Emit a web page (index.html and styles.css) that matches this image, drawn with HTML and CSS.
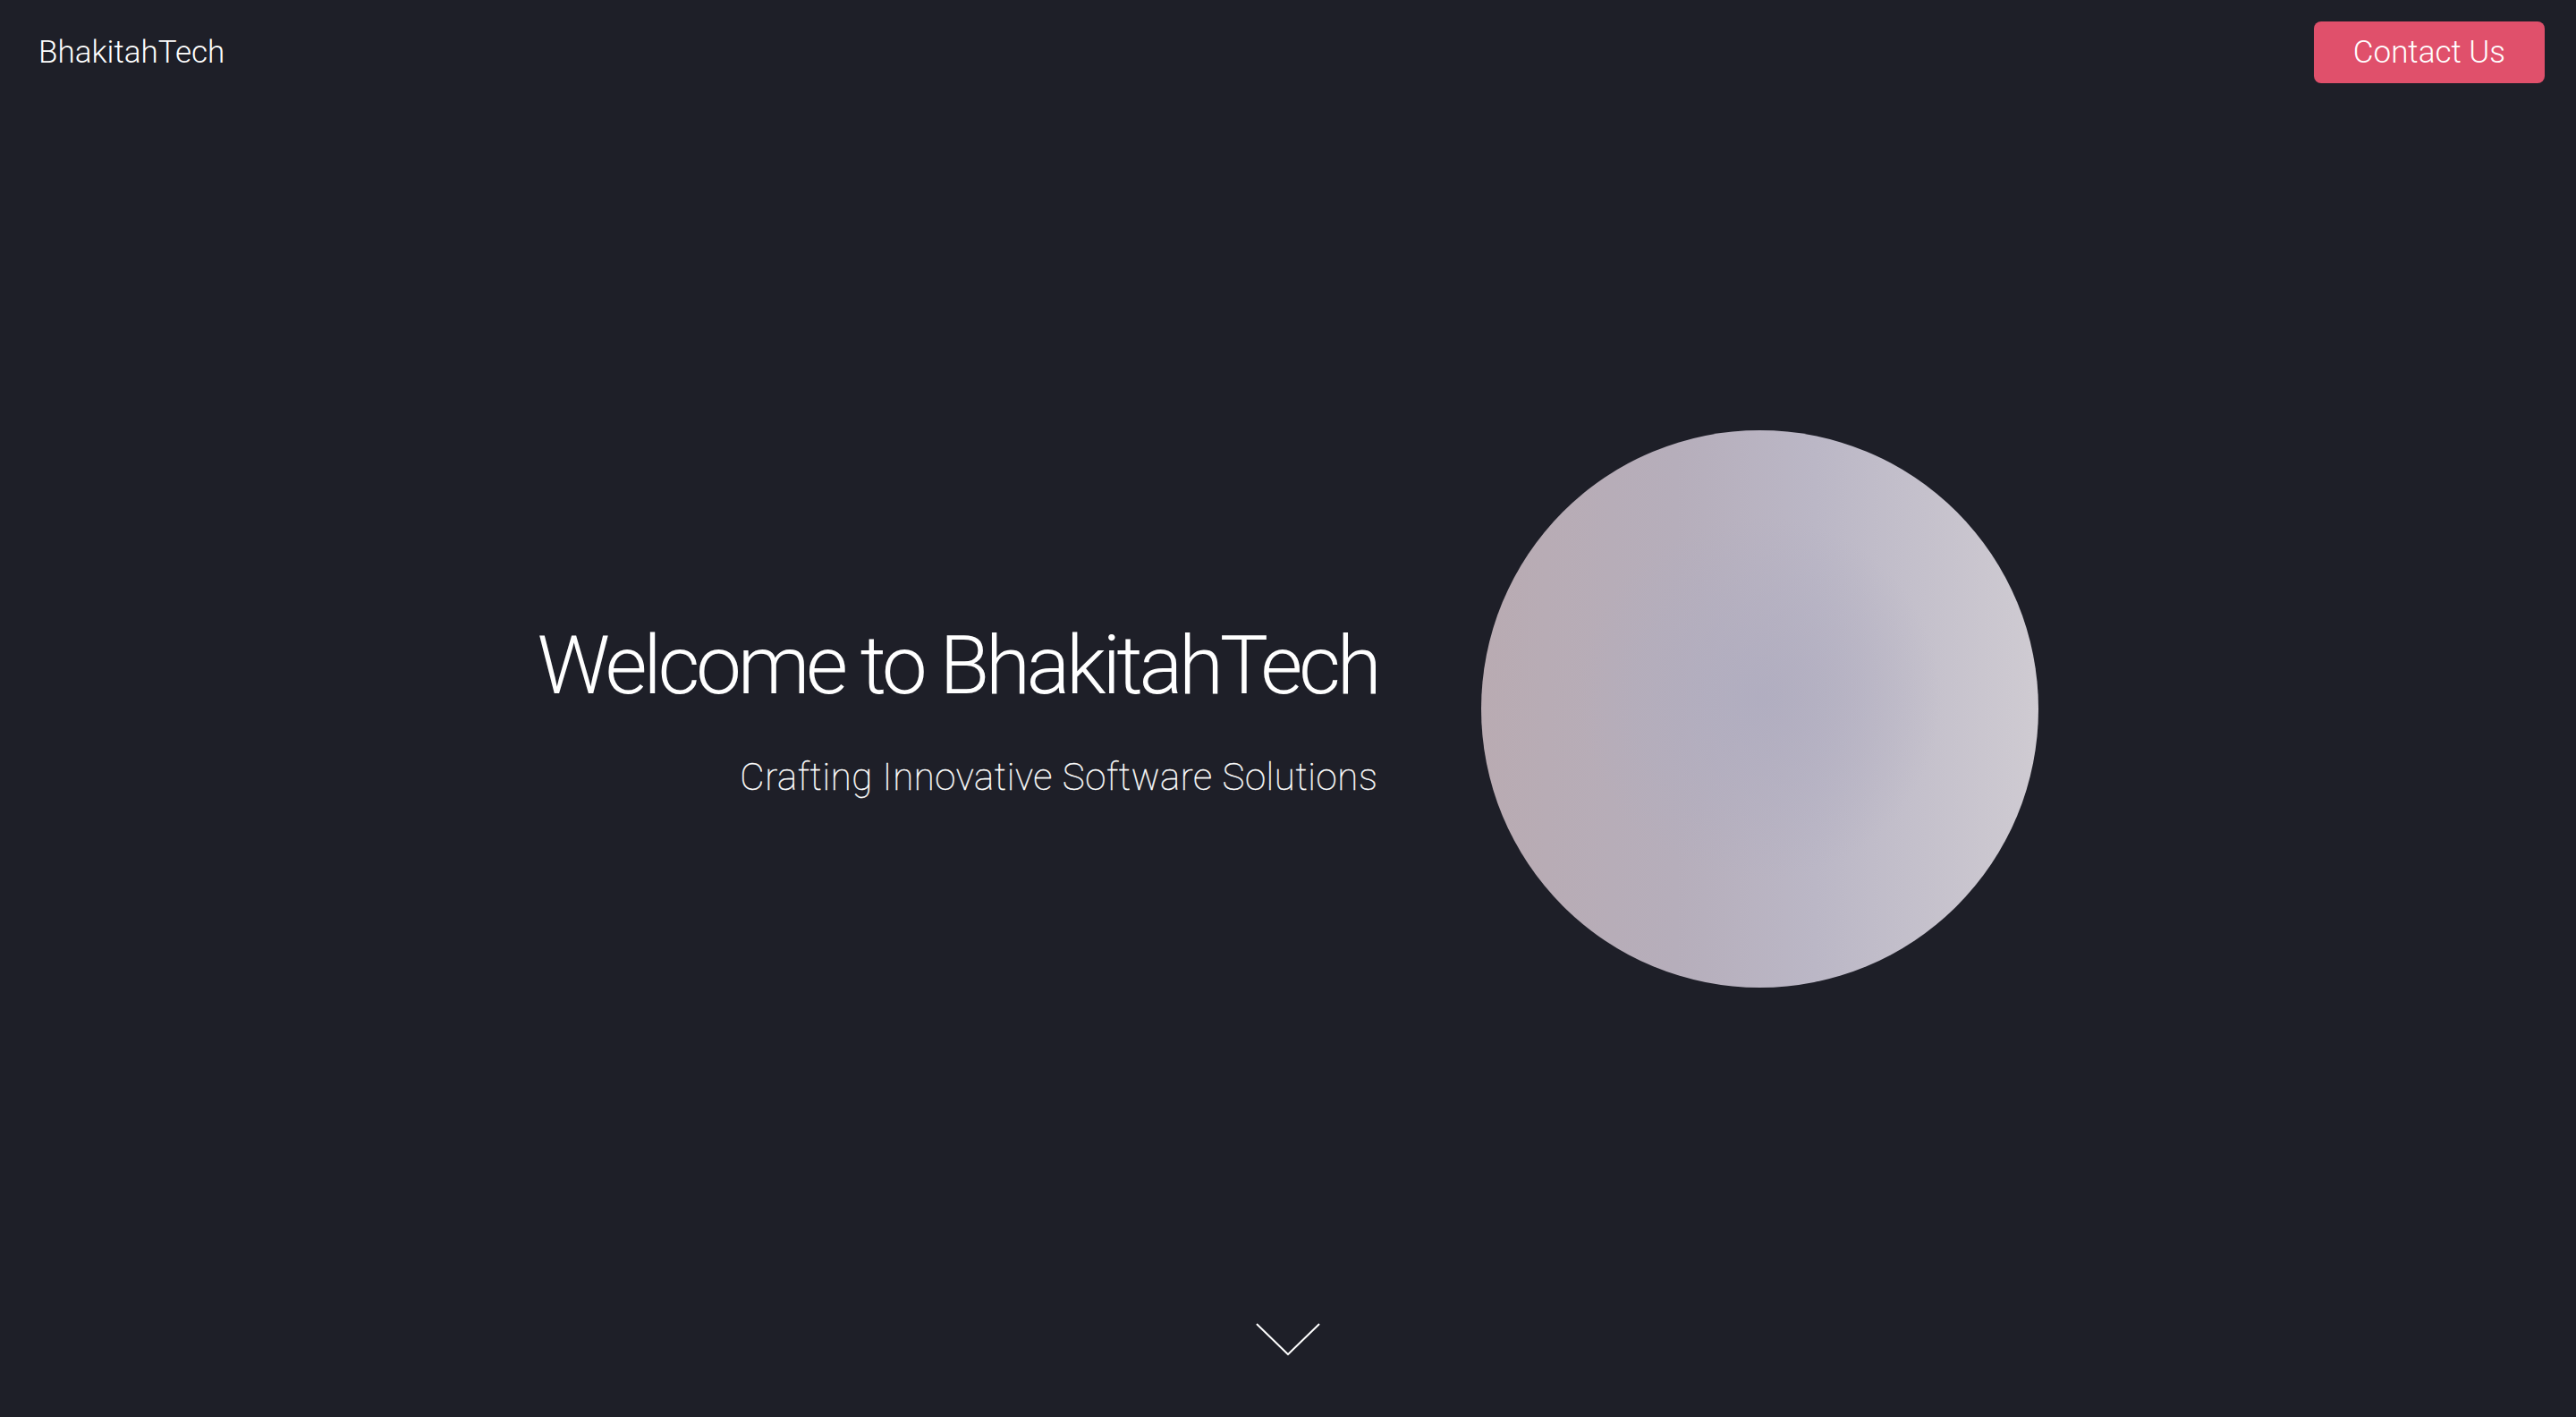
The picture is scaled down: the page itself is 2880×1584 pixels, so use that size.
FILE: index.html
```html
<!DOCTYPE html>
<html lang="en">
<head>
<meta charset="utf-8">
<title>BhakitahTech</title>
<link rel="stylesheet" href="styles.css">
</head>
<body>
<header class="topbar">
  <div class="logo">BhakitahTech</div>
  <a class="contact-btn" href="#">Contact Us</a>
</header>
<main class="hero">
  <div class="hero-text">
    <h1 class="hero-title">Welcome to BhakitahTech</h1>
    <p class="hero-subtitle">Crafting Innovative Software Solutions</p>
  </div>
  <div class="orb"></div>
  <svg class="scroll-cue" width="72" height="36" viewBox="0 0 72 36" aria-hidden="true">
    <polyline points="1,1 36,35 71,1" fill="none" stroke="#ffffff" stroke-width="2"/>
  </svg>
</main>
</body>
</html>
```
FILE: styles.css
```css
html, body {
  margin: 0;
  padding: 0;
}
body {
  background: #1e1f28;
  color: #ffffff;
  font-family: Roboto, "Liberation Sans", sans-serif;
  height: 100vh;
  overflow: hidden;
  position: relative;
}
.topbar {
  position: absolute;
  top: 0;
  left: 0;
  right: 0;
  display: flex;
  justify-content: space-between;
  align-items: center;
  padding: 24px 35px 0 43px;
  z-index: 2;
}
.logo {
  font-size: 35px;
  font-weight: 300;
  line-height: 41px;
}
.contact-btn {
  display: inline-block;
  background: #e0506b;
  color: #ffffff;
  text-decoration: none;
  font-size: 35px;
  font-weight: 300;
  line-height: 41px;
  padding: 14px 44px;
  border-radius: 8px;
}
.hero {
  height: 100vh;
  display: flex;
  justify-content: center;
  align-items: center;
  gap: 116px;
  position: relative;
}
.hero-text {
  text-align: right;
}
.hero-title {
  margin: 0;
  font-size: 91px;
  font-weight: 300;
  line-height: 1.2;
  letter-spacing: -4.3px;
}
.hero-subtitle {
  margin: 45px 0 0;
  font-size: 42px;
  font-weight: 100;
  line-height: 1.2;
  letter-spacing: 0.6px;
  -webkit-text-stroke: 0.4px #ffffff;
}
.orb {
  width: 623px;
  height: 623px;
  border-radius: 50%;
  flex: none;
  background:
    radial-gradient(circle at 50% 48%, rgba(176, 173, 192, 0.9) 0%, rgba(176, 173, 192, 0) 45%),
    linear-gradient(90deg, #b9abb2 0%, #b6aebb 35%, #bbb7c6 60%, #cfcbd2 100%);
}
.scroll-cue {
  position: absolute;
  left: 50%;
  bottom: 69px;
  transform: translateX(-50%);
}
```
